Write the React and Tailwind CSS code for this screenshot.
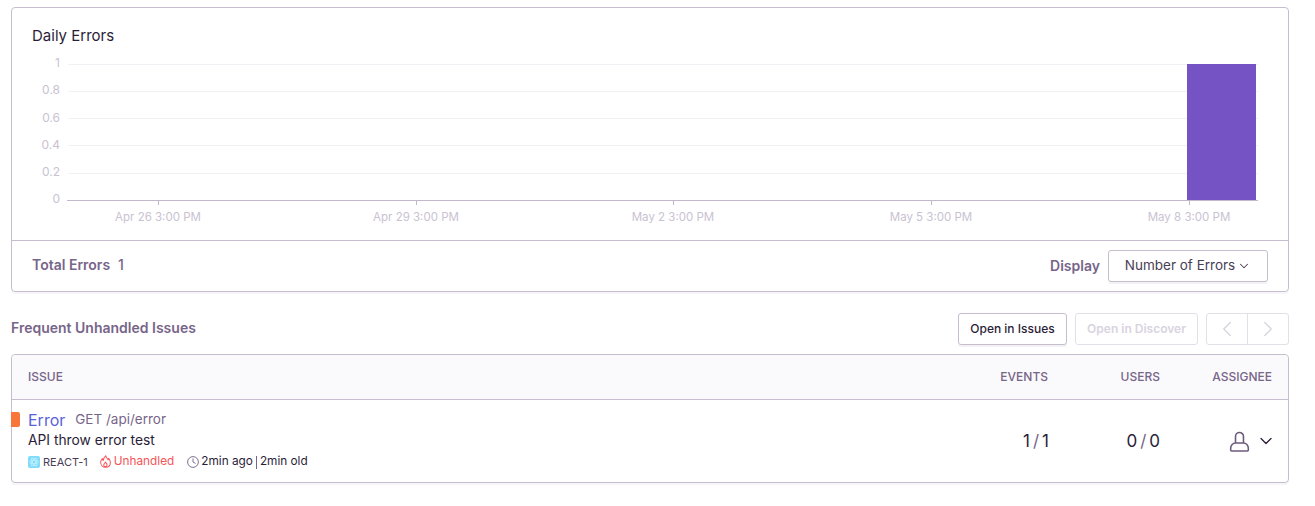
import React from 'react';
import { ChevronDown, ChevronLeft, ChevronRight } from 'lucide-react';

const yTicks = [
  { label: '1', y: 64, text: 67 },
  { label: '0.8', y: 91, text: 94 },
  { label: '0.6', y: 118, text: 122 },
  { label: '0.4', y: 145, text: 149 },
  { label: '0.2', y: 173, text: 176 },
];

const xTicks = [
  { label: 'Apr 26 3:00 PM', x: 158 },
  { label: 'Apr 29 3:00 PM', x: 416 },
  { label: 'May 2 3:00 PM', x: 673 },
  { label: 'May 5 3:00 PM', x: 931 },
  { label: 'May 8 3:00 PM', x: 1189 },
];

function Chart() {
  // svg sits inside the card, so shift by the card's left/top offset
  return (
    <svg width="1276" height="192" viewBox="12 48 1276 192" className="block" style={{ fontFamily: 'Inter, sans-serif' }}>
      {yTicks.map(t => (
        <g key={t.label}>
          <line x1="68" x2="1258" y1={t.y + 0.5} y2={t.y + 0.5} stroke="#f2f0f5" />
          <text x="60" y={t.text} textAnchor="end" fontSize="12" fill="#c9c2d2">{t.label}</text>
        </g>
      ))}
      <text x="60" y="203" textAnchor="end" fontSize="12" fill="#c9c2d2">0</text>
      <line x1="67" x2="1258" y1="200.5" y2="200.5" stroke="#c1b8cc" />
      {xTicks.map(t => (
        <g key={t.label}>
          <line x1={t.x + 0.5} x2={t.x + 0.5} y1="200" y2="205" stroke="#c1b8cc" />
          <text x={t.x} y="221" textAnchor="middle" fontSize="11.5" fill="#c9c2d2">{t.label}</text>
        </g>
      ))}
      <rect x="1187" y="64" width="69" height="136" fill="#7553c4" />
    </svg>
  );
}

function ReactBadge() {
  return (
    <svg width="12" height="12" viewBox="0 0 12 12">
      <rect width="12" height="12" rx="2" fill="#7fdcfb" />
      <g fill="none" stroke="#c4effd" strokeWidth="0.8">
        <ellipse cx="6" cy="6" rx="4.5" ry="1.8" />
        <ellipse cx="6" cy="6" rx="4.5" ry="1.8" transform="rotate(60 6 6)" />
        <ellipse cx="6" cy="6" rx="4.5" ry="1.8" transform="rotate(120 6 6)" />
      </g>
    </svg>
  );
}

function Flame() {
  return (
    <svg width="11" height="13" viewBox="0 0 12 14" fill="none" stroke="#f55459" strokeWidth="1.1" strokeLinejoin="round" className="block -translate-y-px">
      <path d="M6.4 0.7c0.3 2.4 1.4 3 2.5 4.4 0.4-0.4 0.6-1 0.6-1.6 1.2 1.3 1.8 3 1.8 4.5 0 3.2-2.3 5.3-5.3 5.3S0.7 11 0.7 7.9c0-1.9 0.8-3.1 1.9-4.1 0 1.1 0.3 1.8 0.9 2.2C3.6 4 4.8 2.2 6.4 0.7z" />
      <path d="M6 7.6c0.3 1.1 1.7 1.6 1.7 3.1 0 1-0.8 2-1.8 2s-1.8-0.9-1.8-2C4.1 9.4 5.4 8.9 6 7.6z" />
    </svg>
  );
}

function Clock() {
  return (
    <svg width="12" height="12" viewBox="0 0 12 12" fill="none" stroke="#80708f" strokeWidth="1" className="block">
      <circle cx="6" cy="6" r="5.4" />
      <path d="M6 2.8V6l2.2 1.2" strokeLinecap="round" />
    </svg>
  );
}

function UserIcon() {
  return (
    <svg width="21" height="21" viewBox="0 0 20 20" fill="none" stroke="#6c5b7b" strokeWidth="1.5" strokeLinejoin="round" className="block">
      <path d="M6.2 11.5V5.2a3.8 3.8 0 0 1 7.6 0v6.3" />
      <path d="M2.4 19h15.2c0.5 0 0.8-0.3 0.8-0.8v-1.9c0-2.6-2.1-4.8-4.7-4.8H6.3c-2.6 0-4.7 2.2-4.7 4.8v1.9c0 0.5 0.3 0.8 0.8 0.8z" />
    </svg>
  );
}

export default function App() {
  return (
    <div className="w-[1315px] h-[506px] bg-white pl-[11px] pr-[26px] pt-[7px] text-[#2b1d38] overflow-hidden" style={{ fontFamily: 'Inter, sans-serif' }}>
      <div className="border border-[#c6becf] rounded-[4px] shadow-[0_2px_0_rgba(37,11,54,0.04)]">
        <div className="h-[233px] border-b border-[#c6becf]">
          <div className="h-[40px] pl-5 pt-[18px] text-[15px] leading-[20px]">Daily Errors</div>
          <Chart />
        </div>
        <div className="h-[50px] flex items-center justify-between pl-5 pr-5">
          <div className="flex gap-2 text-[14px] font-semibold text-[#776589] -translate-y-[2px]">
            <span>Total Errors</span>
            <span className="font-medium">1</span>
          </div>
          <div className="flex items-center gap-2">
            <span className="text-[14px] font-semibold text-[#776589] -translate-y-px">Display</span>
            <button className="w-[160px] h-[32px] border border-[#c6becf] rounded-[3px] shadow-[0_2px_0_rgba(37,11,54,0.06)] flex items-center justify-center gap-[2px] text-[13.5px] text-[#4a3e56]">
              <span className="-translate-y-px">Number of Errors</span>
              <ChevronDown size={14} strokeWidth={1.75} />
            </button>
          </div>
        </div>
      </div>

      <div className="h-[32px] mt-[21px] flex items-center justify-between">
        <div className="text-[14px] font-semibold text-[#776589] -translate-y-[2px]">Frequent Unhandled Issues</div>
        <div className="flex items-center gap-2">
          <button className="w-[109px] h-[32px] border border-[#c6becf] rounded-[3px] shadow-[0_2px_0_rgba(37,11,54,0.06)] text-[12px] font-medium text-[#2b1d38]">Open in Issues</button>
          <button className="w-[123px] h-[32px] border border-[#e3dfe8] rounded-[3px] text-[12px] font-semibold text-[#d9d4e0]">Open in Discover</button>
          <div className="w-[83px] h-[32px] border border-[#e3dfe8] rounded-[3px] flex text-[#d9d4e0]">
            <div className="flex-1 flex items-center justify-center border-r border-[#e3dfe8]"><ChevronLeft size={26} strokeWidth={1.25} /></div>
            <div className="flex-1 flex items-center justify-center"><ChevronRight size={26} strokeWidth={1.25} /></div>
          </div>
        </div>
      </div>

      <div className="mt-[9px] border border-[#c6becf] rounded-[4px] shadow-[0_2px_0_rgba(37,11,54,0.04)]">
        <div className="h-[45px] bg-[#faf9fb] border-b border-[#c6becf] rounded-t-[4px] flex items-center pl-4 pr-4 text-[12px] font-medium text-[#776589]">
          <div className="flex-1">ISSUE</div>
          <div className="w-[60px] text-right">EVENTS</div>
          <div className="w-[112px] text-right">USERS</div>
          <div className="w-[112px] text-right">ASSIGNEE</div>
        </div>
        <div className="relative h-[82px] flex items-center pl-4 pr-4">
          <div className="absolute left-[-1px] top-[12px] w-[9px] h-[15px] bg-[#f9763b] rounded-r-[2px]" />
          <div className="flex-1 flex flex-col">
            <div className="h-[20px] flex items-center gap-[10px] -translate-y-px">
              <span className="text-[16px] text-[#5a63d8]">Error</span>
              <span className="text-[13.5px] text-[#776589]">GET /api/error</span>
            </div>
            <div className="h-[20px] flex items-center text-[13.8px]">API throw error test</div>
            <div className="h-[21px] flex items-center text-[11.8px] translate-y-px">
              <ReactBadge />
              <span className="ml-[3px] text-[11px] text-[#4a3e56]">REACT-1</span>
              <span className="ml-[12px]"><Flame /></span>
              <span className="ml-[3px] text-[#f55459]">Unhandled</span>
              <span className="ml-[13px]"><Clock /></span>
              <span className="ml-[2px]">2min ago</span>
              <span className="mx-[3px] h-[13px] border-l border-[#776589]" />
              <span>2min old</span>
            </div>
          </div>
          <div className="w-[60px] flex justify-end text-[17px] pr-[3px] translate-y-px">1<span className="text-[#776589] mx-[3px]">/</span>1</div>
          <div className="w-[112px] flex justify-end text-[17px] pr-[4px] translate-y-px">0<span className="text-[#776589] mx-[3px]">/</span>0</div>
          <div className="w-[112px] flex items-center justify-end gap-[6px] text-[#2b1d38] -mr-[4px]">
            <UserIcon />
            <ChevronDown size={20} strokeWidth={1.5} />
          </div>
        </div>
      </div>
    </div>
  );
}
